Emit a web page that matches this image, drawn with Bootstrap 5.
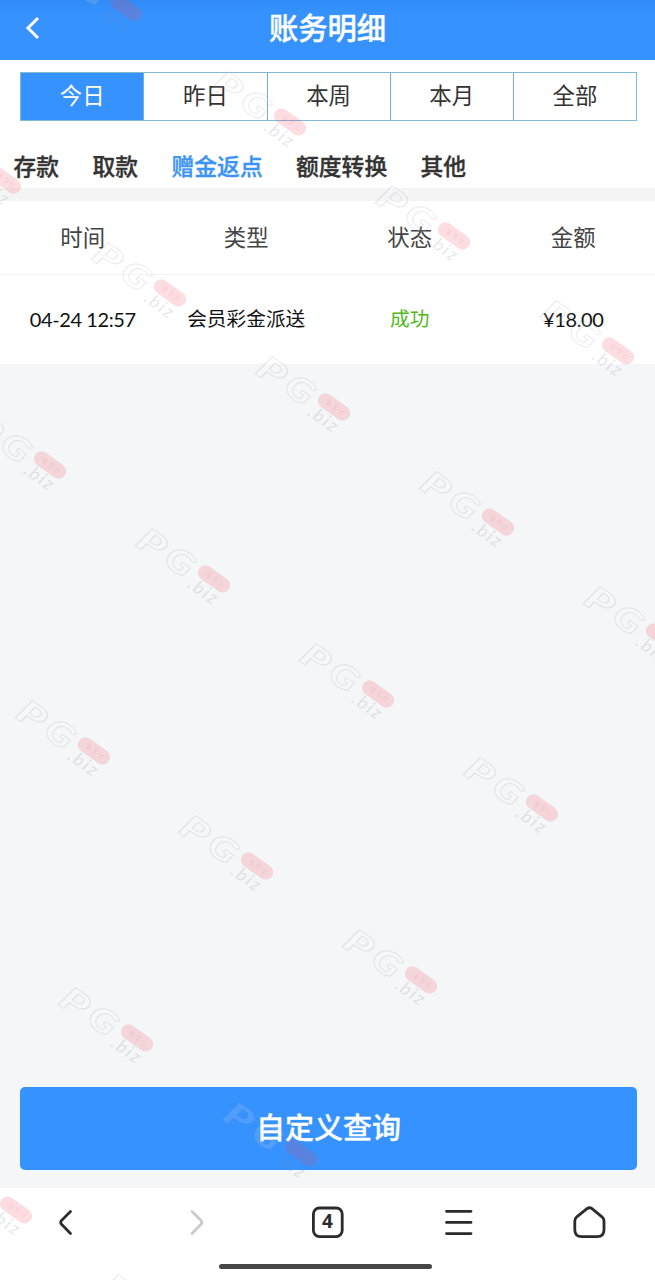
<!DOCTYPE html>
<html lang="zh-CN">
<head>
<meta charset="utf-8">
<meta name="viewport" content="width=device-width, initial-scale=1">
<title>账务明细</title>
<link href="https://cdn.jsdelivr.net/npm/bootstrap@5.3.0/dist/css/bootstrap.min.css" rel="stylesheet">
<style>
body{font-family:"Noto Sans CJK SC",sans-serif;background:#f4f6f7;color:#333;height:1280px;overflow:hidden}
.topbar{height:60px;background:linear-gradient(#308bf6,#3692ff 14px);color:#fff}
.topbar .back{left:24px;top:16px}
.topbar h1{font-size:29.3px;font-weight:500;line-height:53px;-webkit-text-stroke:.4px #fff}
.periods{margin:12px 18px 0 20px;height:49px;border:1px solid #82b9d3}
.periods .btn{font-size:22.4px;line-height:43px;padding:0 0 4px;border:0;border-radius:0;color:#333}
.periods .btn+.btn{border-left:1px solid #6db2cf}
.periods .btn.active{background:#3692ff;color:#fff}
.kinds{height:67px;padding-left:13.5px;gap:33.5px;font-size:22.8px;font-weight:500;line-height:34px;padding-top:28px;-webkit-text-stroke:.35px currentColor}
.kinds .nav-link{padding:0;color:#333;width:45.5px;white-space:nowrap}
.kinds .nav-link.four{width:91px}
.kinds .nav-link.active{color:#3b93f5}
.strip{height:13px;background:#f4f4f5}
.rec-head{height:74px;padding-bottom:2px;padding-left:1px;border-bottom:1px solid #f3f3f3;font-size:22.4px;color:#444}
.rec-row{height:89px;padding-bottom:3px;padding-left:1px;font-size:19.7px;color:#111}
.latin{font-family:"Lato","Noto Sans CJK SC",sans-serif;font-size:20px;letter-spacing:-.4px;padding-top:1px}
.ok{color:#4fb81c}
.query{height:83px;margin:0 18px 18px 20px;padding:0 0 4px;border-radius:5px;background:#3692ff;color:#fff;font-size:29px;font-weight:500;border:0;-webkit-text-stroke:.3px #fff}
.browserbar{height:92px}
.browserbar svg{display:block;margin:17px auto 0}
.homebar{left:219px;bottom:11px;width:213px;height:5px;border-radius:3px;background:#474747}
.marks{inset:0;pointer-events:none}
</style>
</head>
<body class="d-flex flex-column position-relative">
<header class="topbar position-relative text-center flex-shrink-0">
  <svg class="back position-absolute" width="16" height="24" fill="none" stroke="#fff" stroke-width="3"><path d="M14 2 4 12l10 10"/></svg>
  <h1 class="m-0">账务明细</h1>
</header>
<main class="flex-grow-1 d-flex flex-column">
  <section class="bg-white">
    <div class="overflow-hidden">
      <div class="periods d-flex">
        <button class="btn active flex-fill w-100">今日</button><button class="btn flex-fill w-100">昨日</button><button class="btn flex-fill w-100">本周</button><button class="btn flex-fill w-100">本月</button><button class="btn flex-fill w-100">全部</button>
      </div>
    </div>
    <nav class="kinds nav flex-nowrap">
      <a class="nav-link">存款</a><a class="nav-link">取款</a><a class="nav-link four active">赠金返点</a><a class="nav-link four">额度转换</a><a class="nav-link">其他</a>
    </nav>
    <div class="strip"></div>
    <div class="rec-head row g-0 align-items-center text-center"><div class="col">时间</div><div class="col">类型</div><div class="col">状态</div><div class="col">金额</div></div>
    <div class="rec-row row g-0 align-items-center text-center"><div class="col latin">04-24 12:57</div><div class="col">会员彩金派送</div><div class="col ok">成功</div><div class="col latin">¥18.00</div></div>
  </section>
  <button class="query btn mt-auto">自定义查询</button>
</main>
<footer class="browserbar bg-white position-relative flex-shrink-0">
  <div class="row g-0">
    <div class="col"><svg width="34" height="34" fill="none" stroke="#2b2b2b" stroke-width="2.7" stroke-linecap="round" stroke-linejoin="round"><path d="M21.500 6.500 12.500 15.500q-1.700 1.900 0 3.800L21.500 28.500"/></svg></div>
    <div class="col"><svg width="34" height="34" fill="none" stroke="#c9c9c9" stroke-width="2.7" stroke-linecap="round" stroke-linejoin="round"><path d="M12 6.500l9 9q1.700 1.900 0 3.800L12 28.500"/></svg></div>
    <div class="col"><svg width="34" height="34"><rect x="2.400" y="3" width="28.800" height="28.600" rx="6" fill="none" stroke="#2b2b2b" stroke-width="2.800"/><text x="16.500" y="23" text-anchor="middle" font-family="Noto Sans" font-weight="700" font-size="19" fill="#2b2b2b">4</text></svg></div>
    <div class="col"><svg width="34" height="34" fill="none" stroke="#2b2b2b" stroke-width="2.800" stroke-linecap="round"><path d="M4.500 6.300h24.500M4.500 17.400h24.500M4.500 28.600h24.500"/></svg></div>
    <div class="col"><svg width="34" height="34" fill="none" stroke="#2b2b2b" stroke-width="2.800" stroke-linejoin="round"><path d="M14 3.700q2.500-1.800 5 0l10 8.100q2 1.600 2 4.200v8.700q0 7-7 7H8.800q-7 0-7-7v-8.700q0-2.600 2-4.200z"/></svg></div>
  </div>
  <div class="homebar position-absolute"></div>
</footer>
<svg class="marks position-absolute" width="655" height="1280" aria-hidden="true">
  <defs>
    <g id="wm"><g transform="rotate(35)">
      <g font-family="Lato" font-weight="900" font-style="italic" font-size="33" fill="#fff" fill-opacity=".12" stroke="#82829a" stroke-opacity=".17" stroke-width="1"><text transform="translate(-85 18) scale(1.400 1)">P</text><text transform="translate(-52 17) scale(1.250 1)">G</text></g>
      <rect x="-18" y="-7.500" width="36" height="15" rx="7.500" fill="#f04860" fill-opacity=".19"/>
      <path d="M-9-2h5m-5 3h5m-2-4v7m5-6h5m-4 3h4m-3-5v7m5-4h5m-4 3h4" fill="none" stroke="#f04860" stroke-opacity=".1"/>
      <text x="-18" y="22" font-family="Lato" font-style="italic" font-weight="400" font-size="18" letter-spacing="2" fill="#82829a" fill-opacity=".2">.biz</text>
    </g></g>
  </defs>
  <use href="#wm" x="126" y="8"/><use href="#wm" x="290" y="122"/><use href="#wm" x="5" y="180"/><use href="#wm" x="454" y="236"/><use href="#wm" x="170" y="293"/><use href="#wm" x="618" y="351"/><use href="#wm" x="334" y="407"/><use href="#wm" x="50" y="465"/><use href="#wm" x="498" y="522"/><use href="#wm" x="214" y="579"/><use href="#wm" x="662" y="637"/><use href="#wm" x="378" y="694"/><use href="#wm" x="94" y="751"/><use href="#wm" x="542" y="808"/><use href="#wm" x="257" y="866"/><use href="#wm" x="421" y="980"/><use href="#wm" x="137" y="1038"/><use href="#wm" x="301" y="1153"/><use href="#wm" x="16" y="1210"/><use href="#wm" x="180" y="1325"/>
</svg>
<script src="https://cdn.jsdelivr.net/npm/bootstrap@5.3.0/dist/js/bootstrap.bundle.min.js"></script>
</body>
</html>
